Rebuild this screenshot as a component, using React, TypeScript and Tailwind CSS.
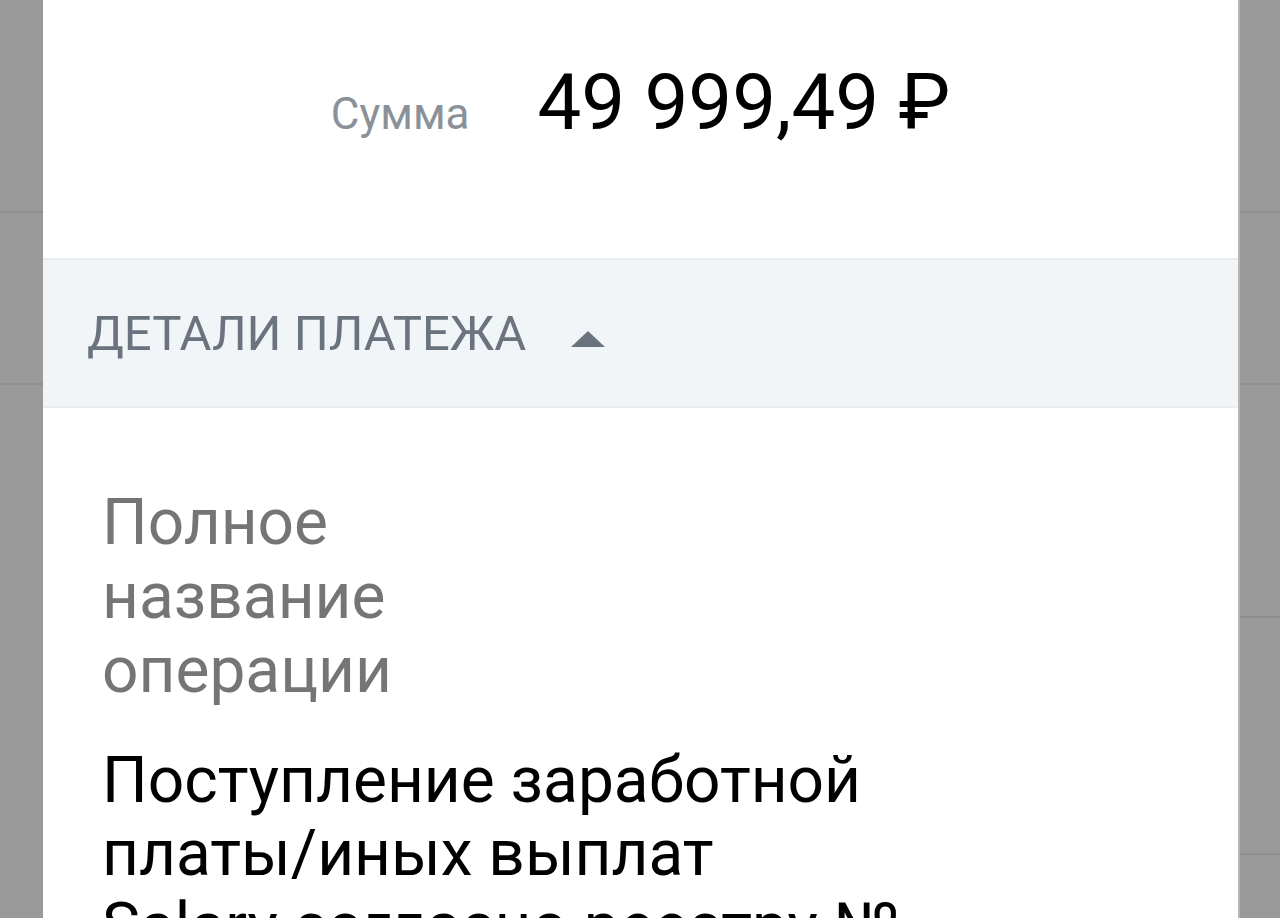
export default function App() {
  const font = { fontFamily: "Roboto, 'Noto Sans', sans-serif" };
  return (
    <div className="flex h-[918px] w-full overflow-hidden bg-[#9a9a9a]" style={font}>
      {/* backdrop list rows, left */}
      <div className="flex w-[43px] shrink-0 flex-col">
        <div className="h-[213px] border-b-2 border-[#8f8f8f]" />
        <div className="h-[172px] border-b-2 border-[#8f8f8f]" />
      </div>

      {/* sheet */}
      <div className="flex min-w-0 flex-1 flex-col bg-white">
        <div className="flex h-[258px] shrink-0 items-baseline justify-center gap-[68px] pt-[64px]">
          <span className="text-[44px] leading-none text-[#8a9199]">Сумма</span>
          <span className="text-[78px] leading-none text-black">49 999,49 ₽</span>
        </div>

        <div className="flex h-[150px] shrink-0 items-center gap-[45px] border-y-2 border-[#e9edf1] bg-[#f2f5f8] pl-[44px]">
          <span className="text-[49px] leading-none text-[#6b747e]">ДЕТАЛИ ПЛАТЕЖА</span>
          <svg width="34" height="16" viewBox="0 0 34 16" className="translate-y-[6px]">
            <path d="M17 0 L34 16 L0 16 Z" fill="#6b747e" />
          </svg>
        </div>

        <div className="flex flex-col pl-[59px] pt-[78px]">
          <div className="w-[400px] text-[64px] leading-[74px] text-[#757575]">Полное название операции</div>
          <div className="mt-[36px] whitespace-nowrap text-[64px] leading-[73px] text-black">
            Поступление заработной
            <br />
            платы/иных выплат
            <br />
            Salary согласно реестру №
          </div>
        </div>
      </div>

      {/* backdrop list rows, right */}
      <div className="flex w-[42px] shrink-0 flex-col border-l-2 border-[#b5b5b5]">
        <div className="h-[213px] border-b-2 border-[#8f8f8f]" />
        <div className="h-[172px] border-b-2 border-[#8f8f8f]" />
        <div className="h-[233px] border-b-2 border-[#8f8f8f]" />
        <div className="h-[237px] border-b-2 border-[#8f8f8f]" />
      </div>
    </div>
  );
}
